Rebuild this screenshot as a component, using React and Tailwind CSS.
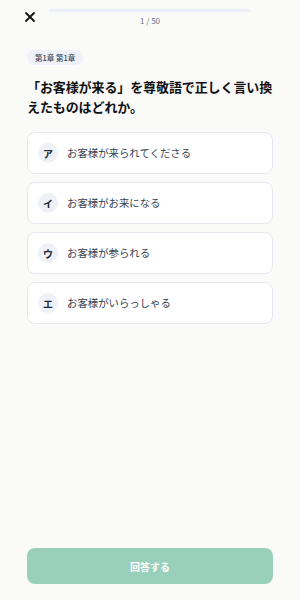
const options = [
  { key: "ア", label: "お客様が来られてくださる" },
  { key: "イ", label: "お客様がお来になる" },
  { key: "ウ", label: "お客様が参られる" },
  { key: "エ", label: "お客様がいらっしゃる" },
];

const font = {
  fontFamily: '"Noto Sans CJK JP", "Noto Sans", sans-serif',
};

export default function App() {
  return (
    <div
      className="flex h-[600px] w-[300px] flex-col bg-[#fafaf9] px-[27px]"
      style={font}
    >
      <header className="flex h-[34px] items-center gap-[13px]">
        <button className="-ml-[3px] flex h-[12px] w-[12px] items-center justify-center text-[#111]">
          <svg width="12" height="12" viewBox="0 0 12 12" fill="none">
            <path
              d="M2 2 L10 10 M10 2 L2 10"
              stroke="currentColor"
              strokeWidth="1.8"
              strokeLinecap="round"
            />
          </svg>
        </button>
        <div className="flex flex-1 flex-col items-center gap-[4px] pt-[1px]">
          <div className="h-[3px] w-full rounded-full bg-[#edf1f7]">
            <div className="h-full w-[2%] rounded-full bg-[#edf1f7]" />
          </div>
          <span className="text-[8px] leading-[10px] text-[#6b7280]">1 / 50</span>
        </div>
        <div className="mr-[-3px] h-[12px] w-[12px]" />
      </header>

      <div className="mt-[16px] flex">
        <span className="rounded-full bg-[#eef1f7] px-[8px] text-[7.5px] font-medium leading-[15px] text-[#374151]">
          第1章 第1章
        </span>
      </div>

      <h1 className="-mr-[2px] mt-[12px] text-[13px] font-bold leading-[20px] tracking-[-0.1px] text-[#111]">
        「お客様が来る」を尊敬語で正しく言い換えたものはどれか。
      </h1>

      <ul className="mt-[15px] flex flex-col gap-[8px]">
        {options.map((o) => (
          <li
            key={o.key}
            className="flex h-[42px] items-center gap-[9px] rounded-[8px] border border-[#e6e8ef] bg-white px-[10px]"
          >
            <span className="flex h-[20px] w-[20px] items-center justify-center rounded-full bg-[#eef1f7] text-[10px] font-bold text-[#1f2937]">
              {o.key}
            </span>
            <span className="text-[10.4px] text-[#374151]">{o.label}</span>
          </li>
        ))}
      </ul>

      <div className="flex-1" />

      <button className="mb-[16px] h-[36px] w-full rounded-[8px] bg-[#98d0bb] text-[10px] font-bold text-white">
        回答する
      </button>
    </div>
  );
}
